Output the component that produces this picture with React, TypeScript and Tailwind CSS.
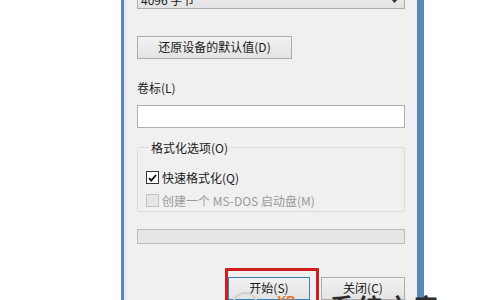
const font = { fontFamily: '"Noto Sans CJK SC", "Noto Sans", sans-serif' }

const Btn = ({ label, focused, className }: { label: string; focused?: boolean; className?: string }) => (
  <div
    className={
      "h-[23px] flex items-center justify-center text-[12px] leading-none text-[#1a1a1a] bg-gradient-to-b from-[#f2f2f2] to-[#e3e3e3] border " +
      (focused ? "border-[#3c7fb1]" : "border-[#acacac]") +
      " " +
      (className ?? "")
    }
  >
    {label}
  </div>
)

const App = () => {
  return (
    <div className="relative w-[500px] h-[300px] overflow-hidden bg-white" style={font}>
      <div className="ml-[121px] w-[303px] h-[300px] flex border-l-[3px] border-r-[7px] border-[#5b87b7]">
        <div className="w-[2px] bg-[#dfe8f2]" />
        <div className="flex-1 bg-[#f0f0f0] pl-[11px] pr-[8px] flex flex-col">
          {/* allocation unit combobox, mostly scrolled off */}
          <div className="mt-[-14px] h-[23px] flex items-center justify-between pl-[3px] pr-[6px] border border-[#acacac] bg-gradient-to-b from-[#f2f2f2] to-[#e3e3e3] text-[12px] text-[#1a1a1a]">
            <span className="mt-[4px]">4096 字节</span>
            <svg width="7" height="4" viewBox="0 0 7 4" className="mt-[6px]">
              <path d="M0 0h7L3.5 4z" fill="#333" />
            </svg>
          </div>

          <Btn label="还原设备的默认值(D)" className="mt-[27px] w-[155px]" />

          <div className="mt-[21px] text-[12px] leading-[16px] text-[#1a1a1a]">卷标(L)</div>
          <div className="mt-[9px] h-[23px] bg-white border border-[#abadb3]" />

          <fieldset className="mt-[13px] h-[72px] border border-[#dcdcdc] rounded-[2px] px-[8px] m-0">
            <legend className="ml-[3px] px-[2px] text-[12px] leading-[14px] text-[#1a1a1a]">格式化选项(O)</legend>
            <div className="mt-[14px] flex items-center gap-[3px] text-[12px] text-[#1a1a1a]">
              <div className="w-[13px] h-[13px] border border-[#333] bg-white flex items-center justify-center">
                <svg width="9" height="8" viewBox="0 0 9 8">
                  <path d="M1 4.2l2.2 2.3L8 1" stroke="#111" strokeWidth="1.9" fill="none" />
                </svg>
              </div>
              <span>快速格式化(Q)</span>
            </div>
            <div className="mt-[5px] flex items-center gap-[3px] text-[12px] text-[#9a9a9a]">
              <div className="w-[13px] h-[13px] border border-[#c4c4c4] bg-[#e6e6e6]" />
              <span>创建一个 MS-DOS 启动盘(M)</span>
            </div>
          </fieldset>

          <div className="mt-[17px] h-[15px] border border-[#bcbcbc] bg-[#e6e6e6]" />

          <div className="mt-[33px] flex justify-end gap-[11px]">
            <div className="relative">
              <Btn label="开始(S)" focused className="w-[82px]" />
              <div className="absolute left-[-3px] top-[-9px] w-[94px] h-[40px] border-[3px] border-[#cf1e1e] rounded-[1px]" />
            </div>
            <Btn label="关闭(C)" className="w-[84px]" />
          </div>
        </div>
        <div className="w-[4px] bg-[#e9f0f8]" />
      </div>

      {/* watermark peeking in at the bottom edge */}
      <div className="absolute left-[232px] top-[292px] w-[26px] h-[26px] rounded-full border-2 border-[#d0d0d0]" />
      <span className="absolute left-[276px] top-[294px] text-[14px] leading-none font-bold italic text-[#e07a3a]" style={{ fontFamily: '"Liberation Sans", sans-serif' }}>
        XP
      </span>
      <span className="absolute left-[330px] top-[294px] text-[24px] font-bold text-[#2b2b2b] leading-none tracking-[4px]">
        系统之家
      </span>
    </div>
  )
}

export default App
